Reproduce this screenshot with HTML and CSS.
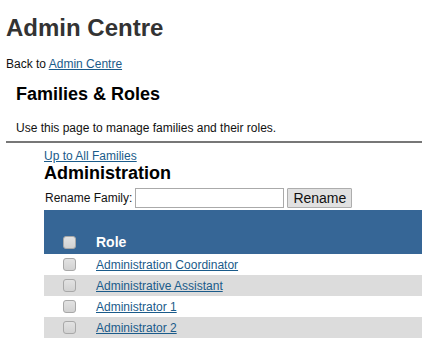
FILE: index.html
```html
<!DOCTYPE html>
<html>
<head>
<meta charset="utf-8">
<title>Admin Centre</title>
<link rel="stylesheet" href="styles.css">
</head>
<body>
<h1 class="page-title">Admin Centre</h1>
<p class="back">Back to <a href="#">Admin Centre</a></p>
<div class="section-head">
  <h2 class="section-title">Families &amp; Roles</h2>
  <p class="section-desc">Use this page to manage families and their roles.</p>
</div>
<hr class="rule">
<div class="family">
  <a class="up-link" href="#">Up to All Families</a>
  <h3 class="family-title">Administration</h3>
  <form class="rename">
    <label class="rename-label" for="fam">Rename Family:</label>
    <input class="rename-input" id="fam" type="text">
    <button class="rename-btn" type="button">Rename</button>
  </form>
  <table class="roles">
    <thead>
      <tr>
        <th class="col-check"><input class="cb" type="checkbox"></th>
        <th class="col-role">Role</th>
      </tr>
    </thead>
    <tbody>
      <tr><td class="col-check"><input class="cb" type="checkbox"></td><td class="col-role"><a href="#">Administration Coordinator</a></td></tr>
      <tr class="alt"><td class="col-check"><input class="cb" type="checkbox"></td><td class="col-role"><a href="#">Administrative Assistant</a></td></tr>
      <tr><td class="col-check"><input class="cb" type="checkbox"></td><td class="col-role"><a href="#">Administrator 1</a></td></tr>
      <tr class="alt"><td class="col-check"><input class="cb" type="checkbox"></td><td class="col-role"><a href="#">Administrator 2</a></td></tr>
    </tbody>
  </table>
</div>
</body>
</html>
```
FILE: styles.css
```css
html, body {
  overflow: hidden;
}
body {
  margin: 0;
  padding: 0 0 0 6px;
  font-family: "Liberation Sans", Arial, sans-serif;
  font-size: 12px;
  line-height: 14px;
  color: #111;
  background: #fff;
}
a {
  color: #1a5b8a;
  text-decoration: underline;
}
.page-title {
  margin: 14px 0 0;
  font-size: 24px;
  line-height: 28px;
  font-weight: bold;
  color: #333;
}
.back {
  margin: 15px 0 0;
}
.section-head {
  padding-left: 10px;
}
.section-title {
  margin: 13px 0 0;
  font-size: 18px;
  line-height: 21px;
  font-weight: bold;
  color: #000;
}
.section-desc {
  margin: 16px 0 0;
}
.rule {
  margin: 6px 0 0;
  height: 0;
  border: 0;
  border-top: 2px solid #777;
}
.family {
  margin-left: 38px;
}
.up-link {
  display: block;
  margin-top: 6px;
}
.family-title {
  margin: 0;
  font-size: 18px;
  line-height: 21px;
  font-weight: bold;
  color: #000;
}
.rename {
  margin: 4px 0 0;
  display: flex;
  align-items: center;
  gap: 3px;
}
.rename-label {
  padding-left: 1px;
}
.rename-input {
  box-sizing: border-box;
  width: 149px;
  height: 20px;
  margin: 0;
  border: 1px solid #aaa;
  background: #fff;
  padding: 0 2px;
  font: 12px "Liberation Sans", Arial, sans-serif;
}
.rename-btn {
  box-sizing: border-box;
  width: 65px;
  height: 20px;
  margin: 0;
  padding: 0;
  border: 1px solid #adadad;
  border-radius: 1px;
  background: #e1e1e1;
  color: #111;
  font: 14px/18px "Liberation Sans", Arial, sans-serif;
}
.roles {
  margin-top: 2px;
  width: 100%;
  border-collapse: collapse;
  border-spacing: 0;
}
.roles th {
  height: 39px;
  padding: 0 0 5px;
  vertical-align: bottom;
  background: #366696;
  color: #fff;
  text-align: left;
  font-size: 14px;
  line-height: 16px;
  font-weight: bold;
}
.roles th.col-role {
  padding-bottom: 4px;
}
.roles td {
  height: 21px;
  padding: 0;
  vertical-align: middle;
}
.roles .alt td {
  background: #dcdcdc;
}
.col-check {
  width: 33px;
  padding-left: 19px !important;
}
.cb {
  -webkit-appearance: none;
  appearance: none;
  display: block;
  box-sizing: border-box;
  width: 13px;
  height: 13px;
  margin: 0;
  border: 1px solid #a8a8a8;
  border-radius: 3px;
  background: linear-gradient(#e2e2e2, #d2d2d2);
}
```
